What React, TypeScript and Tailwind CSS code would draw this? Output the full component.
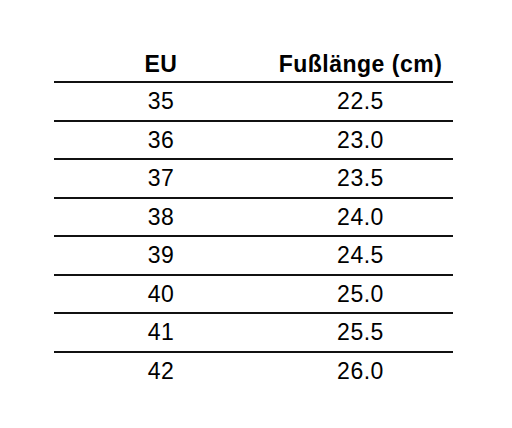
import React from "react";

const rows: [string, string][] = [
  ["35", "22.5"],
  ["36", "23.0"],
  ["37", "23.5"],
  ["38", "24.0"],
  ["39", "24.5"],
  ["40", "25.0"],
  ["41", "25.5"],
  ["42", "26.0"],
];

export default function App() {
  return (
    <div
      className="w-[512px] h-[428px] bg-white text-black pt-[46.5px] pl-[54px]"
      style={{ fontFamily: '"Liberation Sans", Arial, sans-serif' }}
    >
      <div className="w-[399px] flex flex-col text-[23px] tracking-[0.5px]">
        <div className="flex h-[36.5px] items-center font-bold border-b-2 border-[#111]">
          <div className="w-[214px] text-center">EU</div>
          <div className="flex-1 text-center">Fußlänge (cm)</div>
        </div>
        {rows.map(([eu, cm], i) => (
          <div
            key={eu}
            className={
              i < rows.length - 1
                ? "flex h-[38.5px] items-center border-b-2 border-[#111]"
                : "flex h-[36.5px] items-center"
            }
          >
            <div className="w-[214px] text-center">{eu}</div>
            <div className="flex-1 text-center">{cm}</div>
          </div>
        ))}
      </div>
    </div>
  );
}
